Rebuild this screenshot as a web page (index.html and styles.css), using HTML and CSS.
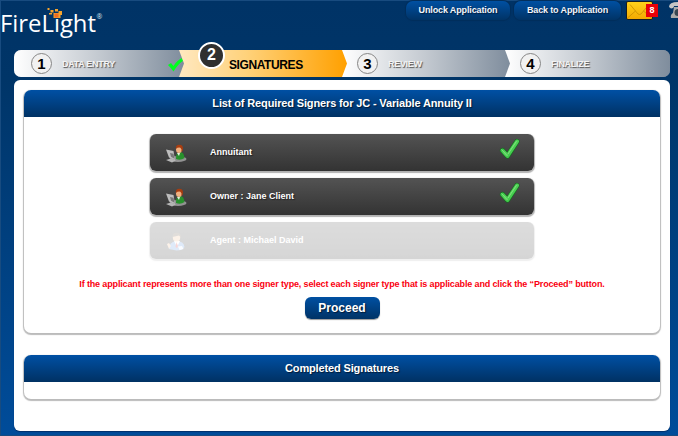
FILE: index.html
```html
<!DOCTYPE html>
<html lang="en">
<head>
<meta charset="utf-8">
<title>FireLight</title>
<link rel="stylesheet" href="styles.css">
</head>
<body>
<svg class="defs" width="0" height="0" aria-hidden="true">
  <defs>
    <linearGradient id="tick" x1="0" y1="0" x2="1" y2="1"><stop offset="0" stop-color="#23b53a"/><stop offset=".5" stop-color="#52d358"/><stop offset="1" stop-color="#2cbc3c"/></linearGradient>
    <linearGradient id="mail" x1="0" y1="0" x2="0" y2="1"><stop offset="0" stop-color="#ffd21c"/><stop offset="1" stop-color="#f3a900"/></linearGradient>
    <symbol id="check" viewBox="0 0 24 24">
      <path d="M4.500 13.500l5 5.500L19 4.500" fill="none" stroke="#176d20" stroke-width="5.200" stroke-linecap="round" stroke-linejoin="round"/>
      <path d="M4.500 13.500l5 5.500L19 4.500" fill="none" stroke="url(#tick)" stroke-width="4" stroke-linecap="round" stroke-linejoin="round"/>
      <path d="M3.800 12.800l5.500 6M10 17L18.300 4.500" fill="none" stroke="#8fe689" stroke-width=".8" stroke-linecap="round"/>
    </symbol>
    <symbol id="user" viewBox="0 0 22 20">
      <ellipse cx="13" cy="15" rx="8.500" ry="3" fill="#929292"/>
      <path d="M11 14q0-6 4-6q4 0 4.500 6q-4 3-8.500 1z" fill="#28912c"/>
      <path d="M12 9l2 3 1-3z" fill="#e8eee0"/>
      <ellipse cx="14" cy="5.500" rx="3" ry="3.600" fill="#f0b080"/>
      <path d="M10.800 5q-.3-4.300 3.500-4.300q4.300 0 3.600 5q-.3 2-1.400 2.200q.5-3.200-1.200-4.200q-2.500-.5-4.500 1.300z" fill="#a83d10"/>
      <path d="M1 5.500l7.500 1.500 1.500 9-6-2.500z" fill="#bdbdbd"/>
      <path d="M5 9l3.500.8 1 5-3.500-2z" fill="#777"/>
      <path d="M1 16l5-1.500 5 2-4 2z" fill="#b5b5b5"/>
    </symbol>
    <symbol id="agent" viewBox="0 0 22 20">
      <path d="M4 17q0-7 7-8q8 0 8.500 6q-2 3.500-8 3.500z" fill="#5e95df"/>
      <path d="M9 9l3 6 3-6z" fill="#fff"/>
      <path d="M11.500 10l-1 5 1.500 1 1-2z" fill="#d33"/>
      <ellipse cx="11.500" cy="5.500" rx="3.700" ry="4" fill="#edbd91"/>
      <path d="M7.500 5q0-4.300 4-4.300q4.500 0 4.500 4.800l-2-2z" fill="#645546"/>
      <path d="M2 12l2-1 2 3-2 3z" fill="#edbd91"/>
      <path d="M13 14.500l4-.5 1.500 3-4 1z" fill="#e5f0ff"/>
    </symbol>
  </defs>
</svg>
<div class="app">
  <header class="top">
    <svg class="logo" width="106" height="42" viewBox="0 0 106 42">
      <text class="wordmark" x="0" y="32" textLength="96" lengthAdjust="spacingAndGlyphs">FireLight</text>
      <text class="reg" x="96.500" y="19">®</text>
      <g fill="#f5a42d"><path d="M47.500 8h2v2h-2zM50.500 10h3v2.500h-3zM55 9h3v2.500h-3zM58.500 11h3.500v4h-3.500zM49 13h3v1.500h-3zM53.500 13h7v5h-7z"/><path d="M54.500 13.500h4v4h-4z" fill="#ef6b24"/></g>
    </svg>
    <nav class="actions">
      <button class="pill unlock">Unlock Application</button>
      <button class="pill back">Back to Application</button>
      <div class="mail">
        <svg width="27" height="19" viewBox="0 0 27 19"><rect x=".5" y=".5" width="26" height="18" rx="1.500" fill="url(#mail)" stroke="#171d22"/><path d="M4 3.500l8 9.500q1.500 1 3 0l8-9.500M1.500 17l8-7M25.500 17l-8-7" fill="none" stroke="#c98d00" stroke-width=".8"/></svg>
        <span class="badge">8</span>
      </div>
      <svg class="phone" width="9" height="18" viewBox="0 0 9 18"><path d="M0 6q0-5 9-5v4H5q0 2-3 2.500z" fill="#c5c5c5"/><path d="M5 6h4v11H2q-1-3 2-5z" fill="#aaa"/><path d="M9 8a3.500 3.500 0 0 0 0 7z" fill="#394652"/></svg>
    </nav>
  </header>
  <ol class="steps">
    <li class="step first"><span class="num">1</span><span class="label">DATA ENTRY</span>
      <svg class="done" width="18" height="15" viewBox="0 0 18 15"><path d="M1 8l3-2 2.500 3Q10 3 16 .5l.5 3Q11 7 6.500 14.500Q4 11 1 8z" fill="#00ff1e"/></svg></li>
    <li class="step active"><span class="num">2</span><span class="label">SIGNATURES</span></li>
    <li class="step third"><span class="num">3</span><span class="label">REVIEW</span></li>
    <li class="step last"><span class="num">4</span><span class="label">FINALIZE</span></li>
  </ol>
  <main class="sheet">
    <section class="panel required">
      <h2 class="panel-title">List of Required Signers for JC - Variable Annuity II</h2>
      <ul class="signers">
        <li class="signer"><svg class="avatar"><use href="#user"/></svg><span class="name">Annuitant</span><svg class="tick"><use href="#check"/></svg></li>
        <li class="signer"><svg class="avatar"><use href="#user"/></svg><span class="name">Owner : Jane Client</span><svg class="tick"><use href="#check"/></svg></li>
        <li class="signer disabled"><svg class="avatar"><use href="#agent"/></svg><span class="name">Agent : Michael David</span></li>
      </ul>
      <p class="hint">If the applicant represents more than one signer type, select each signer type that is applicable and click the “Proceed” button.</p>
      <button class="proceed">Proceed</button>
    </section>
    <section class="panel completed">
      <h2 class="panel-title">Completed Signatures</h2>
    </section>
  </main>
</div>
</body>
</html>
```
FILE: styles.css
```css
* { box-sizing: border-box; }
body { margin: 0; font-family: "Liberation Sans", Arial, sans-serif; }
.defs { position: absolute; }
.app {
  width: 678px; height: 436px; overflow: hidden;
  background: linear-gradient(#003366 0, #003568 80px, #004c9a 100%);
  box-shadow: inset 1px 1px #184b7f, inset 0 -1px #184b7f;
}
.top { height: 50px; display: flex; justify-content: space-between; align-items: flex-start; }
.logo { display: block; }
.wordmark { font: 400 24px "Open Sans", sans-serif; fill: #fff; }
.reg { font: 7px "Open Sans", sans-serif; fill: #d9e3ec; }
.actions { display: flex; align-items: flex-start; padding-top: 1px; }
.pill {
  height: 19px; padding: 0; border: 0; border-radius: 7px; white-space: nowrap; letter-spacing: -.13px;
  color: #f2f5fa; font: bold 9px/19px "Liberation Sans", Arial, sans-serif;
  background: linear-gradient(#0050a2, #003366);
  box-shadow: 0 0 1px 1px #002e5b; text-shadow: 1px 1px 1px #001f40;
}
.unlock { width: 104px; margin-right: 4px; }
.back { width: 107px; margin-right: 5px; }
.mail { position: relative; width: 43px; height: 19px; }
.mail svg { display: block; }
.badge {
  position: absolute; left: 20px; top: 3px; width: 12px; height: 13px;
  background: #e90009; color: #fff; font: bold 9px/13px "Liberation Sans", Arial, sans-serif; text-align: center;
}
.phone { display: block; }
.steps {
  list-style: none; margin: 0 0 0 14px; padding: 0; width: 656px; height: 27px; display: flex;
  border-radius: 7px; background: #8491a0;
}
.step {
  display: flex; align-items: center; position: relative; width: 168px; margin-right: -5px; padding-left: 17px;
  background: linear-gradient(90deg, #fff, #c3c9d0 50%, #7f8d9d);
  clip-path: polygon(0 0, calc(100% - 5px) 0, 100% 50%, calc(100% - 5px) 100%, 0 100%);
}
.first { width: 170px; z-index: 4; border-radius: 7px 0 0 7px; }
.active {
  z-index: 5; background: linear-gradient(90deg, #ffe8c0, #ffd27b 40%, #ffa000); padding-left: 19px;
  clip-path: polygon(0 -10px, 100% -10px, calc(100% - 5px) 0, 100% 50%, calc(100% - 5px) 100%, 0 100%, 5px 50%, 0 0);
}
.third { z-index: 3; padding-left: 15px; }
.last { z-index: 2; flex: 1; margin-right: 0; padding-left: 15px; clip-path: none; border-radius: 0 7px 7px 0; }
.num {
  width: 21px; height: 21px; border: 1px solid #858585; border-radius: 50%; background: #f1f1f1;
  color: #000; font: bold 15px/19px "Liberation Sans", Arial, sans-serif; text-align: center; flex: none;
}
.label { margin-left: 10px; padding-top: 1px; font-weight: bold; font-size: 9px; letter-spacing: -.3px; color: #f4f4f4; text-shadow: 1px 1px 1px #555; white-space: nowrap; }
.active .num { width: 27px; height: 27px; border: 2px solid #fff; background: #303030; color: #fff; font-size: 16px; line-height: 22px; margin-top: -17px; }
.active .label { margin-left: 4px; font-size: 12px; letter-spacing: -.4px; color: #000; text-shadow: none; padding-top: 3px; }
.done { position: absolute; left: 153px; top: 7px; }
.sheet { width: 656px; height: 351px; margin: 3px 0 0 14px; padding: 10px; border-radius: 6px; background: #fff; box-shadow: 0 1px 1px #00306b; }
.panel { background: #fff; border-radius: 7px; box-shadow: 0 1px 1px 1px #bbb; overflow: hidden; }
.required { height: 243px; display: flex; flex-direction: column; align-items: center; }
.completed { height: 44px; margin-top: 22px; }
.panel-title {
  width: 100%; height: 27px; margin: 0; text-align: center; color: #fff;
  font: bold 11px/27px "Liberation Sans", Arial, sans-serif; letter-spacing: -.14px;
  background: linear-gradient(#0050a4, #003163); text-shadow: 1px 1px 1px #001b38;
}
.signers { list-style: none; width: 384px; padding: 0; margin: 17px 0 0; display: grid; gap: 7px; }
.signer {
  height: 37px; display: flex; align-items: center; padding-left: 15px; border-radius: 6px;
  background: linear-gradient(#535353, #333); box-shadow: 0 1px 1px 1px rgba(0,0,0,.3); color: #fff;
}
.disabled { opacity: .2; }
.avatar { width: 22px; height: 20px; margin-top: 2px; }
.disabled .name { text-shadow: none; }
.name { margin: -2px 0 0 23px; font-weight: bold; font-size: 9px; white-space: nowrap; text-shadow: 1px 1px 1px #222; }
.tick { width: 24px; height: 24px; margin: -7px 12px 0 auto; }
.hint { margin: 19px 0 0; color: #fa0010; font-weight: bold; font-size: 9px; line-height: 12px; letter-spacing: -.142px; white-space: nowrap; }
.proceed {
  width: 75px; height: 22px; margin-top: 7px; padding: 0; border: 0; border-radius: 6px; color: #fff;
  font: bold 12px/22px "Liberation Sans", Arial, sans-serif;
  background: linear-gradient(#0050a2, #003366); box-shadow: 0 1px 1px #999; text-shadow: 1px 1px 1px #001b38;
}
```
